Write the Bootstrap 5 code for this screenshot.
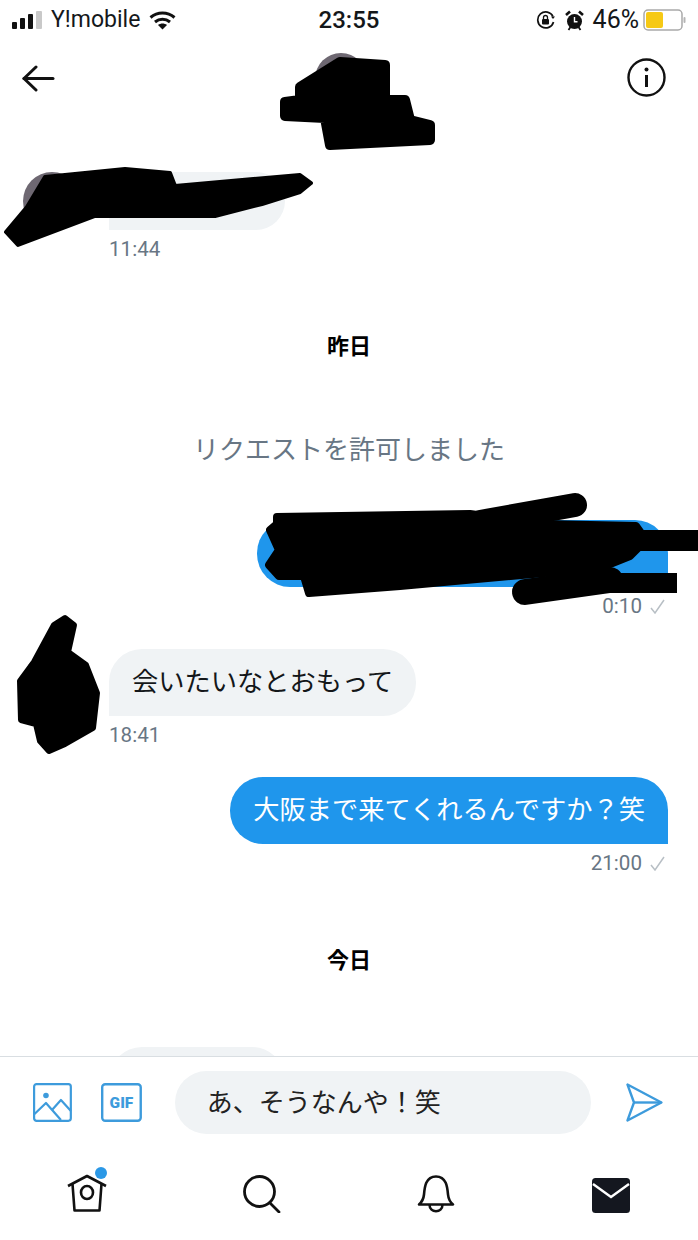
<!DOCTYPE html>
<html lang="ja">
<head>
<meta charset="UTF-8" />
<meta name="viewport" content="width=device-width, initial-scale=1.0" />
<title>Messages</title>
<link href="https://cdn.jsdelivr.net/npm/bootstrap@5.3.3/dist/css/bootstrap.min.css" rel="stylesheet" />
<style>
	body {
		background: #fff;
		color: #14171a;
		font-family: Roboto, "Noto Sans CJK JP", sans-serif;
	}
	.phone { width: 698px; height: 1240px; overflow: hidden; }

	/* status bar */
	.status-bar { height: 38px; padding: 2px 12px 0; font-size: 23px; flex: none; }
	.status-side { flex: 1 1 0; gap: 9px; }
	.status-time { font-weight: 500; font-size: 24px; }
	.status-right { gap: 9px; }
	.status-pct { font-size: 25px; }

	/* header */
	.chat-head { height: 117px; padding: 20px 32px 0 22px; flex: none; }
	.back-arrow { margin-top: 7px; }
	.head-avatar { width: 52px; height: 52px; margin-top: -5px; background: #6e6872; }

	/* messages */
	.chat-scroll { padding: 0 30px 0 23px; min-height: 0; }
	.bubble {
		height: 67px;
		padding: 0 23px;
		font-size: 26.25px;
		line-height: 67px;
		border-radius: 33px;
		white-space: nowrap;
	}
	.bubble-in { background: #f0f3f5; border-bottom-left-radius: 0; }
	.bubble-out { background: #1f96ec; color: #fff; border-bottom-right-radius: 0; }
	.bubble-first { width: 176px; height: 58px; border-radius: 29px; border-bottom-left-radius: 0; }
	.bubble-redacted { width: 411px; }
	.bubble-peek { width: 176px; margin-left: 86px; margin-top: 71px; flex: none; }
	.avatar-in { width: 66px; height: 66px; background: #6e6872; margin-right: 20px; flex: none; }
	.avatar-first { height: 58px; width: 58px; margin-right: 28px; }
	.msg-time { margin-top: 7px; font-size: 20.6px; line-height: 24px; color: #687684; }
	.time-in { margin-left: 86px; }
	.time-out { margin-right: 3px; }
	.day-label { margin-top: 71px; padding-left: 7px; font-size: 22px; line-height: 30px; font-weight: 700; color: #000; }
	.req-note { margin-top: 70px; padding-left: 7px; font-size: 26px; line-height: 36px; color: #687684; }
	.gap-a { margin-top: 17px; }
	.gap-b { margin-top: 52px; }
	.gap-c { margin-top: 31px; }
	.gap-d { margin-top: 30px; }

	/* composer */
	.composer {
		height: 94px;
		padding: 0 35px 3px 33px;
		border-top: 1px solid #d9dee2;
		background: #fff;
		flex: none;
	}
	.composer-input {
		width: 417px;
		height: 63px;
		margin: 0 35px 0 33px;
		padding: 2px 0 0 32px;
		background: #f0f3f5;
		border-radius: 32px;
		font-size: 26px;
		line-height: 61px;
		color: #222;
	}
	.gif-gap { margin-left: 29px; }

	/* tabs */
	.tab-bar { height: 90px; flex: none; padding-bottom: 27px; }
	.tab-item { flex: 1 1 0; }
	.blackout { pointer-events: none; }
</style>
</head>
<body>
<div class="phone position-relative d-flex flex-column">

	<!-- status bar -->
	<div class="status-bar d-flex align-items-center">
		<div class="status-side d-flex align-items-center">
			<svg width="30" height="18" viewBox="0 0 30 18">
				<rect x="0" y="11" width="5" height="7" rx="1" fill="#111"/>
				<rect x="8" y="7" width="5" height="11" rx="1" fill="#111"/>
				<rect x="16" y="3" width="5" height="15" rx="1" fill="#111"/>
				<rect x="24" y="0" width="6" height="18" rx="1" fill="#c9c9c9"/>
			</svg>
			<span>Y!mobile</span>
			<svg width="27" height="19" viewBox="0 0 27 19" fill="none" stroke="#111" stroke-width="3">
				<path d="M1.500 6.500c7-6 17-6 24 0"/>
				<path d="M6 11c4.500-3.800 10.500-3.800 15 0"/>
				<path d="M13.500 18.500l-4.500-4.500c2.500-2 6.500-2 9 0z" fill="#111" stroke="none"/>
			</svg>
		</div>
		<div class="status-time">23:55</div>
		<div class="status-side status-right d-flex align-items-center justify-content-end">
			<svg width="20" height="18" viewBox="0 0 20 18" fill="none" stroke="#111" stroke-width="1.700">
				<path d="M17 5.500A8 8 0 1 0 17.500 11"/>
				<path d="M15 5.500h4l-2 2.500z" fill="#111" stroke="none"/>
				<rect x="6" y="8" width="7" height="5.500" rx="1" fill="#111" stroke="none"/>
				<path d="M7.500 8V6.500a2 2 0 0 1 4 0V8" stroke-width="1.300"/>
			</svg>
			<svg width="19" height="21" viewBox="0 0 19 21" fill="none">
				<circle cx="9.500" cy="11.500" r="7.500" fill="#111"/>
				<path d="M1 5l4-3.500M18 5l-4-3.500" stroke="#111" stroke-width="2.600"/>
				<path d="M3.500 20l2-3M15.500 20l-2-3" stroke="#111" stroke-width="1.800"/>
				<path d="M9.500 7v4.800h3" stroke="#fff" stroke-width="1.400"/>
			</svg>
			<span class="d-flex align-items-center gap-1">
				<span class="status-pct">46%</span>
				<svg width="43" height="22" viewBox="0 0 43 22">
					<rect x="1" y="1" width="38" height="20" rx="4" fill="#fff" stroke="#a9a9a9" stroke-width="1.500"/>
					<rect x="3" y="3" width="17" height="16" rx="2" fill="#f6c915"/>
					<rect x="40.500" y="8" width="2" height="6" rx="1" fill="#b5b5b5"/>
				</svg>
			</span>
		</div>
	</div>

	<!-- header -->
	<div class="chat-head d-flex justify-content-between align-items-start">
		<svg class="back-arrow" width="33" height="27" viewBox="0 0 33 27" fill="none" stroke="#111" stroke-width="3" stroke-linecap="round" stroke-linejoin="round">
			<path d="M14 2L2 13.500L14 25"/>
			<path d="M2 13.500H31"/>
		</svg>
		<div class="head-avatar rounded-circle"></div>
		<svg width="39" height="39" viewBox="0 0 39 39" fill="none" stroke="#111" stroke-width="2.400">
			<circle cx="19.500" cy="19.500" r="18"/>
			<path d="M19.500 17v12" stroke-width="3"/>
			<circle cx="19.500" cy="11.500" r="2" fill="#111" stroke="none"/>
		</svg>
	</div>

	<!-- messages -->
	<div class="chat-scroll flex-grow-1 d-flex flex-column overflow-hidden">
		<div class="d-flex align-items-end gap-a">
			<div class="avatar-in avatar-first rounded-circle"></div>
			<div class="bubble bubble-in bubble-first"></div>
		</div>
		<div class="msg-time time-in">11:44</div>

		<div class="day-label text-center">昨日</div>
		<div class="req-note text-center">リクエストを許可しました</div>

		<div class="d-flex justify-content-end gap-b">
			<div class="bubble bubble-out bubble-redacted"></div>
		</div>
		<div class="msg-time time-out d-flex justify-content-end align-items-center gap-2">
			<span>0:10</span>
			<svg width="15" height="15" viewBox="0 0 15 15" fill="none" stroke="#b8bfc5" stroke-width="1.500"><path d="M1 9l4 5L14 1"/></svg>
		</div>

		<div class="d-flex align-items-end gap-c">
			<div class="avatar-in rounded-circle"></div>
			<div class="bubble bubble-in">会いたいなとおもって</div>
		</div>
		<div class="msg-time time-in">18:41</div>

		<div class="d-flex justify-content-end gap-d">
			<div class="bubble bubble-out">大阪まで来てくれるんですか？笑</div>
		</div>
		<div class="msg-time time-out d-flex justify-content-end align-items-center gap-2">
			<span>21:00</span>
			<svg width="15" height="15" viewBox="0 0 15 15" fill="none" stroke="#b8bfc5" stroke-width="1.500"><path d="M1 9l4 5L14 1"/></svg>
		</div>

		<div class="day-label text-center">今日</div>
		<div class="bubble bubble-in bubble-peek"></div>
	</div>

	<!-- composer -->
	<div class="composer d-flex align-items-center">
		<svg width="39" height="39" viewBox="0 0 39 39" fill="none" stroke="#3d9bdc" stroke-width="2.200" stroke-linejoin="round">
			<rect x="1.100" y="1.100" width="36.800" height="36.800" rx="2.500"/>
			<circle cx="13" cy="12.500" r="2.800" fill="#3d9bdc" stroke="none"/>
			<path d="M1.500 31L13 20l15 17"/>
			<path d="M19 27l9-10 10 11"/>
		</svg>
		<svg class="gif-gap" width="41" height="39" viewBox="0 0 41 39" fill="none">
			<rect x="1.200" y="1.200" width="38.600" height="36.600" rx="3" stroke="#3d9bdc" stroke-width="2.400"/>
			<text x="20.500" y="25.500" text-anchor="middle" font-family="Roboto, sans-serif" font-weight="900" font-size="15.500" fill="#3d9bdc">GIF</text>
		</svg>
		<div class="composer-input">あ、そうなんや！笑</div>
		<svg width="37" height="39" viewBox="0 0 37 39" fill="none" stroke="#3d9bdc" stroke-width="2.400" stroke-linejoin="round">
			<path d="M1.500 1.500L35.500 19.500L1.500 37.500L8 19.500z"/>
			<path d="M8 19.500H35.500"/>
		</svg>
	</div>

	<!-- tabs -->
	<div class="tab-bar d-flex align-items-end">
		<div class="tab-item d-flex justify-content-center position-relative">
			<svg width="42" height="46" viewBox="0 0 42 46" fill="none" stroke="#111" stroke-width="2.600" stroke-linejoin="round">
				<circle cx="35" cy="6" r="6" fill="#2b98e6" stroke="none"/>
				<path d="M2 19L21 9l19 10"/>
				<path d="M6.500 17l2 26.500h25l2-26.500"/>
				<ellipse cx="21" cy="25.500" rx="6" ry="6.500"/>
			</svg>
		</div>
		<div class="tab-item d-flex justify-content-center">
			<svg width="38" height="38" viewBox="0 0 38 38" fill="none" stroke="#111" stroke-width="2.800" stroke-linecap="round">
				<ellipse cx="16.500" cy="16.500" rx="15" ry="15"/>
				<path d="M27 28l9 9"/>
			</svg>
		</div>
		<div class="tab-item d-flex justify-content-center">
			<svg width="38" height="38" viewBox="0 0 38 38" fill="none" stroke="#111" stroke-width="2.600" stroke-linejoin="round">
				<path d="M2 29.500c3.500-3 4.500-5 5-10 .6-7 1.500-18 12-18s11.400 11 12 18c.5 5 1.500 7 5 10z"/>
				<path d="M12.500 29.500c0 9 13 9 13 0"/>
			</svg>
		</div>
		<div class="tab-item d-flex justify-content-center">
			<svg width="38" height="35" viewBox="0 0 38 35">
				<rect x="0" y="0" width="38" height="35" rx="3.500" fill="#14171f"/>
				<path d="M1 6l18 13L37 6" fill="none" stroke="#fff" stroke-width="2.400"/>
			</svg>
		</div>
	</div>

	<!-- marker scribbles lying over the names and avatars -->
	<svg class="blackout position-absolute top-0 start-0" width="698" height="1240" viewBox="0 0 698 1240" fill="none" stroke="#000" stroke-linecap="round" stroke-linejoin="round">
		<!-- title -->
		<path d="M300 87L340 62L385 65L385 100L405 100L410 120L430 125L430 140L330 145L325 118L285 116L285 102L300 100Z" fill="#000" stroke-width="10"/>
		<!-- first incoming message -->
		<path d="M45 177L125 169L170 173L175 186L300 175L311 183L300 192L262 204L215 216L95 216L18 245L6 232L27 207Z" fill="#000" stroke-width="4"/>
		<!-- outgoing message -->
		<path d="M277 517L470 514L545 524L636 526L646 540L630 556L600 568L400 586L309 593L304 576L279 576L269 565L279 550L270 530L277 524Z" fill="#000" stroke-width="8"/>
		<path d="M480 522L575 505" stroke-width="24"/>
		<path d="M525 592L610 580" stroke-width="26"/>
		<path d="M610 530H698V551H610ZM600 573H677V593H600Z" fill="#000" stroke-width="0"/>
		<!-- second avatar -->
		<path d="M65 618L74 625L68 652L86 665L97 693L93 728L65 744L49 751L40 741L36 724L21 720L20 681L34 662L54 625Z" fill="#000" stroke-width="6"/>
	</svg>
</div>
<script src="https://cdn.jsdelivr.net/npm/bootstrap@5.3.3/dist/js/bootstrap.bundle.min.js"></script>
</body>
</html>
